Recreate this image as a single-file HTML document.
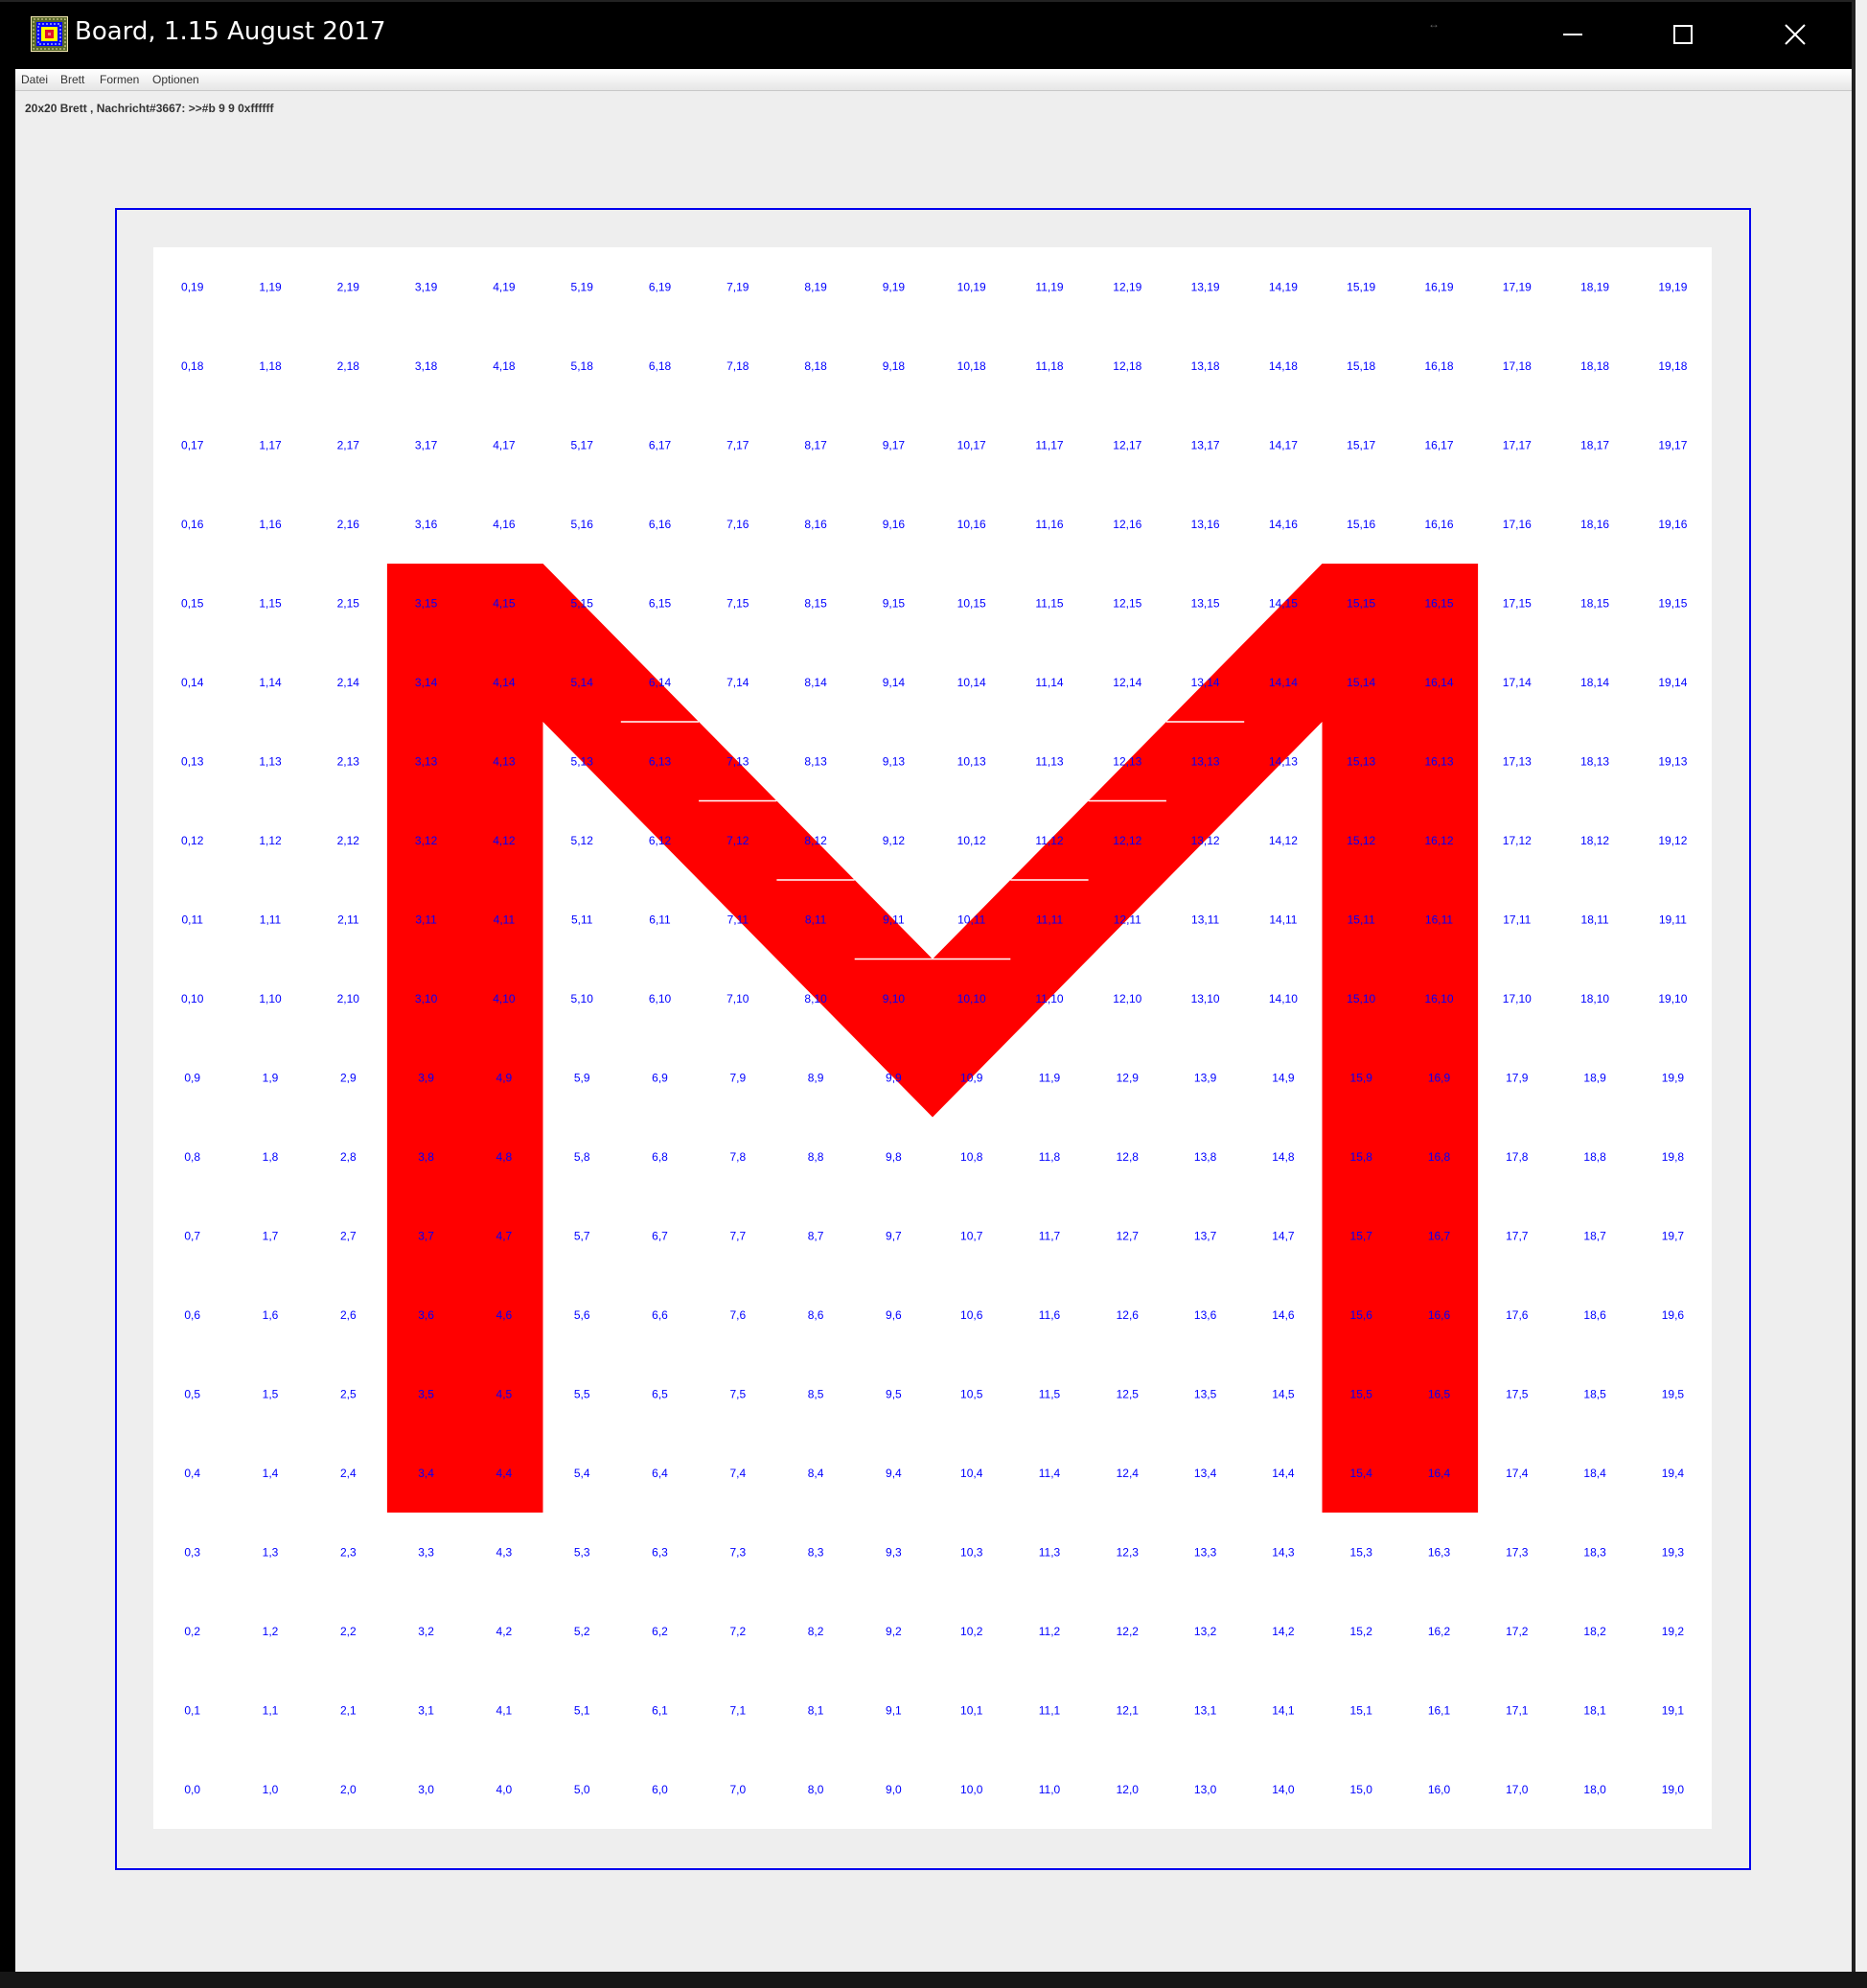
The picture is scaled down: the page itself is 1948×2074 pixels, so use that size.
<!DOCTYPE html>
<html><head><meta charset="utf-8"><style>
html,body{margin:0;padding:0;}
body{width:1948px;height:2074px;position:relative;overflow:hidden;background:#000;font-family:"Liberation Sans",sans-serif;}
.abs{position:absolute;}
#win{left:16px;top:0;width:1916px;height:2057px;background:#eeeeee;}
#title{left:0;top:0;width:1932px;height:72px;background:#000;border-top:2px solid #222;box-sizing:border-box;}
#ttext{left:78px;top:18px;color:#fff;font-size:26px;font-family:"DejaVu Sans","Liberation Sans",sans-serif;letter-spacing:0px;}
#menu{left:16px;top:72px;width:1916px;height:22px;background:linear-gradient(#ffffff,#e6e6e6);border-bottom:1px solid #c8c8c8;}
#menu span{position:absolute;top:4px;font-size:12px;color:#333;}
#status{left:26px;top:106px;font-size:12px;font-weight:bold;color:#333;}
#right{left:1932px;top:0;width:16px;height:2057px;background:#f0f0f0;border-left:4px solid #222;box-sizing:border-box;}
#bottom{left:0;top:2057px;width:1948px;height:17px;background:#161616;}
#blue{left:120px;top:217px;width:1707px;height:1734px;border:2px solid #0000ee;box-sizing:border-box;}
svg text{font-family:"Liberation Sans",sans-serif;font-size:12px;fill:#0000ff;text-anchor:middle;}
</style></head><body>
<div id="win" class="abs"></div>
<div id="title" class="abs"></div>
<svg class="abs" style="left:32px;top:17px" width="40" height="38" viewBox="0 0 40 38">
<rect x="0.5" y="0.5" width="38" height="36" fill="#5a6a2c" stroke="#f2e6b0"/>
<rect x="3" y="3" width="33" height="31" fill="none" stroke="#e8e0a0" stroke-width="1" stroke-dasharray="2 2"/>
<rect x="6" y="6" width="27" height="25" fill="#0000ff"/>
<rect x="8" y="8" width="23" height="21" fill="none" stroke="#ffffff" stroke-width="1" stroke-dasharray="2 2"/>
<rect x="11" y="11" width="17" height="15" fill="#ffff00"/>
<rect x="15" y="14" width="9" height="9" fill="#e0102a"/>
<rect x="18" y="17" width="3" height="3" fill="#f08080"/>
</svg>
<div id="ttext" class="abs">Board, 1.15 August 2017</div>
<div class="abs" style="left:1490px;top:18px;color:#666;font-size:12px">↔</div>
<div class="abs" style="left:1631px;top:35px;width:20px;height:2px;background:#fff"></div>
<div class="abs" style="left:1746px;top:26px;width:20px;height:20px;border:2px solid #fff;box-sizing:border-box"></div>
<svg class="abs" style="left:1862px;top:25px" width="22" height="22"><path d="M1 1L21 21M21 1L1 21" stroke="#fff" stroke-width="2"/></svg>
<div id="menu" class="abs"><span style="left:6px">Datei</span><span style="left:47px">Brett</span><span style="left:88px">Formen</span><span style="left:143px">Optionen</span></div>
<div id="status" class="abs">20x20 Brett , Nachricht#3667: &gt;&gt;#b 9 9 0xffffff</div>
<div id="blue" class="abs"></div>
<div id="right" class="abs"></div>
<div id="bottom" class="abs"></div>
<svg class="abs" style="left:160px;top:258px" width="1626" height="1650">
<rect width="1626" height="1650" fill="#fff"/>
<g fill="#ff0000">
<rect x="243.9" y="330" width="162.6" height="990"/>
<rect x="1219.5" y="330" width="162.6" height="990"/>
<polygon points="406.5,330 813,742.5 813,907.5 406.5,495"/>
<polygon points="1219.5,330 813,742.5 813,907.5 1219.5,495"/>
</g>
<g stroke="#fff" stroke-width="1.5">
<line x1="487.8" y1="495" x2="569.1" y2="495"/><line x1="1056.9" y1="495" x2="1138.2" y2="495"/>
<line x1="569.1" y1="577.5" x2="650.4" y2="577.5"/><line x1="975.6" y1="577.5" x2="1056.9" y2="577.5"/>
<line x1="650.4" y1="660" x2="731.7" y2="660"/><line x1="894.3" y1="660" x2="975.6" y2="660"/>
<line x1="731.7" y1="742.5" x2="894.3" y2="742.5"/>
</g>
<g transform="translate(0,45.3)"><text x="40.7">0,19</text><text x="122">1,19</text><text x="203.3">2,19</text><text x="284.6">3,19</text><text x="365.9">4,19</text><text x="447.2">5,19</text><text x="528.5">6,19</text><text x="609.8">7,19</text><text x="691.1">8,19</text><text x="772.4">9,19</text><text x="853.7">10,19</text><text x="935">11,19</text><text x="1016.3">12,19</text><text x="1097.6">13,19</text><text x="1178.9">14,19</text><text x="1260.2">15,19</text><text x="1341.5">16,19</text><text x="1422.8">17,19</text><text x="1504.1">18,19</text><text x="1585.4">19,19</text></g>
<g transform="translate(0,127.8)"><text x="40.7">0,18</text><text x="122">1,18</text><text x="203.3">2,18</text><text x="284.6">3,18</text><text x="365.9">4,18</text><text x="447.2">5,18</text><text x="528.5">6,18</text><text x="609.8">7,18</text><text x="691.1">8,18</text><text x="772.4">9,18</text><text x="853.7">10,18</text><text x="935">11,18</text><text x="1016.3">12,18</text><text x="1097.6">13,18</text><text x="1178.9">14,18</text><text x="1260.2">15,18</text><text x="1341.5">16,18</text><text x="1422.8">17,18</text><text x="1504.1">18,18</text><text x="1585.4">19,18</text></g>
<g transform="translate(0,210.3)"><text x="40.7">0,17</text><text x="122">1,17</text><text x="203.3">2,17</text><text x="284.6">3,17</text><text x="365.9">4,17</text><text x="447.2">5,17</text><text x="528.5">6,17</text><text x="609.8">7,17</text><text x="691.1">8,17</text><text x="772.4">9,17</text><text x="853.7">10,17</text><text x="935">11,17</text><text x="1016.3">12,17</text><text x="1097.6">13,17</text><text x="1178.9">14,17</text><text x="1260.2">15,17</text><text x="1341.5">16,17</text><text x="1422.8">17,17</text><text x="1504.1">18,17</text><text x="1585.4">19,17</text></g>
<g transform="translate(0,292.8)"><text x="40.7">0,16</text><text x="122">1,16</text><text x="203.3">2,16</text><text x="284.6">3,16</text><text x="365.9">4,16</text><text x="447.2">5,16</text><text x="528.5">6,16</text><text x="609.8">7,16</text><text x="691.1">8,16</text><text x="772.4">9,16</text><text x="853.7">10,16</text><text x="935">11,16</text><text x="1016.3">12,16</text><text x="1097.6">13,16</text><text x="1178.9">14,16</text><text x="1260.2">15,16</text><text x="1341.5">16,16</text><text x="1422.8">17,16</text><text x="1504.1">18,16</text><text x="1585.4">19,16</text></g>
<g transform="translate(0,375.3)"><text x="40.7">0,15</text><text x="122">1,15</text><text x="203.3">2,15</text><text x="284.6">3,15</text><text x="365.9">4,15</text><text x="447.2">5,15</text><text x="528.5">6,15</text><text x="609.8">7,15</text><text x="691.1">8,15</text><text x="772.4">9,15</text><text x="853.7">10,15</text><text x="935">11,15</text><text x="1016.3">12,15</text><text x="1097.6">13,15</text><text x="1178.9">14,15</text><text x="1260.2">15,15</text><text x="1341.5">16,15</text><text x="1422.8">17,15</text><text x="1504.1">18,15</text><text x="1585.4">19,15</text></g>
<g transform="translate(0,457.8)"><text x="40.7">0,14</text><text x="122">1,14</text><text x="203.3">2,14</text><text x="284.6">3,14</text><text x="365.9">4,14</text><text x="447.2">5,14</text><text x="528.5">6,14</text><text x="609.8">7,14</text><text x="691.1">8,14</text><text x="772.4">9,14</text><text x="853.7">10,14</text><text x="935">11,14</text><text x="1016.3">12,14</text><text x="1097.6">13,14</text><text x="1178.9">14,14</text><text x="1260.2">15,14</text><text x="1341.5">16,14</text><text x="1422.8">17,14</text><text x="1504.1">18,14</text><text x="1585.4">19,14</text></g>
<g transform="translate(0,540.3)"><text x="40.7">0,13</text><text x="122">1,13</text><text x="203.3">2,13</text><text x="284.6">3,13</text><text x="365.9">4,13</text><text x="447.2">5,13</text><text x="528.5">6,13</text><text x="609.8">7,13</text><text x="691.1">8,13</text><text x="772.4">9,13</text><text x="853.7">10,13</text><text x="935">11,13</text><text x="1016.3">12,13</text><text x="1097.6">13,13</text><text x="1178.9">14,13</text><text x="1260.2">15,13</text><text x="1341.5">16,13</text><text x="1422.8">17,13</text><text x="1504.1">18,13</text><text x="1585.4">19,13</text></g>
<g transform="translate(0,622.8)"><text x="40.7">0,12</text><text x="122">1,12</text><text x="203.3">2,12</text><text x="284.6">3,12</text><text x="365.9">4,12</text><text x="447.2">5,12</text><text x="528.5">6,12</text><text x="609.8">7,12</text><text x="691.1">8,12</text><text x="772.4">9,12</text><text x="853.7">10,12</text><text x="935">11,12</text><text x="1016.3">12,12</text><text x="1097.6">13,12</text><text x="1178.9">14,12</text><text x="1260.2">15,12</text><text x="1341.5">16,12</text><text x="1422.8">17,12</text><text x="1504.1">18,12</text><text x="1585.4">19,12</text></g>
<g transform="translate(0,705.3)"><text x="40.7">0,11</text><text x="122">1,11</text><text x="203.3">2,11</text><text x="284.6">3,11</text><text x="365.9">4,11</text><text x="447.2">5,11</text><text x="528.5">6,11</text><text x="609.8">7,11</text><text x="691.1">8,11</text><text x="772.4">9,11</text><text x="853.7">10,11</text><text x="935">11,11</text><text x="1016.3">12,11</text><text x="1097.6">13,11</text><text x="1178.9">14,11</text><text x="1260.2">15,11</text><text x="1341.5">16,11</text><text x="1422.8">17,11</text><text x="1504.1">18,11</text><text x="1585.4">19,11</text></g>
<g transform="translate(0,787.8)"><text x="40.7">0,10</text><text x="122">1,10</text><text x="203.3">2,10</text><text x="284.6">3,10</text><text x="365.9">4,10</text><text x="447.2">5,10</text><text x="528.5">6,10</text><text x="609.8">7,10</text><text x="691.1">8,10</text><text x="772.4">9,10</text><text x="853.7">10,10</text><text x="935">11,10</text><text x="1016.3">12,10</text><text x="1097.6">13,10</text><text x="1178.9">14,10</text><text x="1260.2">15,10</text><text x="1341.5">16,10</text><text x="1422.8">17,10</text><text x="1504.1">18,10</text><text x="1585.4">19,10</text></g>
<g transform="translate(0,870.3)"><text x="40.7">0,9</text><text x="122">1,9</text><text x="203.3">2,9</text><text x="284.6">3,9</text><text x="365.9">4,9</text><text x="447.2">5,9</text><text x="528.5">6,9</text><text x="609.8">7,9</text><text x="691.1">8,9</text><text x="772.4">9,9</text><text x="853.7">10,9</text><text x="935">11,9</text><text x="1016.3">12,9</text><text x="1097.6">13,9</text><text x="1178.9">14,9</text><text x="1260.2">15,9</text><text x="1341.5">16,9</text><text x="1422.8">17,9</text><text x="1504.1">18,9</text><text x="1585.4">19,9</text></g>
<g transform="translate(0,952.8)"><text x="40.7">0,8</text><text x="122">1,8</text><text x="203.3">2,8</text><text x="284.6">3,8</text><text x="365.9">4,8</text><text x="447.2">5,8</text><text x="528.5">6,8</text><text x="609.8">7,8</text><text x="691.1">8,8</text><text x="772.4">9,8</text><text x="853.7">10,8</text><text x="935">11,8</text><text x="1016.3">12,8</text><text x="1097.6">13,8</text><text x="1178.9">14,8</text><text x="1260.2">15,8</text><text x="1341.5">16,8</text><text x="1422.8">17,8</text><text x="1504.1">18,8</text><text x="1585.4">19,8</text></g>
<g transform="translate(0,1035.3)"><text x="40.7">0,7</text><text x="122">1,7</text><text x="203.3">2,7</text><text x="284.6">3,7</text><text x="365.9">4,7</text><text x="447.2">5,7</text><text x="528.5">6,7</text><text x="609.8">7,7</text><text x="691.1">8,7</text><text x="772.4">9,7</text><text x="853.7">10,7</text><text x="935">11,7</text><text x="1016.3">12,7</text><text x="1097.6">13,7</text><text x="1178.9">14,7</text><text x="1260.2">15,7</text><text x="1341.5">16,7</text><text x="1422.8">17,7</text><text x="1504.1">18,7</text><text x="1585.4">19,7</text></g>
<g transform="translate(0,1117.8)"><text x="40.7">0,6</text><text x="122">1,6</text><text x="203.3">2,6</text><text x="284.6">3,6</text><text x="365.9">4,6</text><text x="447.2">5,6</text><text x="528.5">6,6</text><text x="609.8">7,6</text><text x="691.1">8,6</text><text x="772.4">9,6</text><text x="853.7">10,6</text><text x="935">11,6</text><text x="1016.3">12,6</text><text x="1097.6">13,6</text><text x="1178.9">14,6</text><text x="1260.2">15,6</text><text x="1341.5">16,6</text><text x="1422.8">17,6</text><text x="1504.1">18,6</text><text x="1585.4">19,6</text></g>
<g transform="translate(0,1200.3)"><text x="40.7">0,5</text><text x="122">1,5</text><text x="203.3">2,5</text><text x="284.6">3,5</text><text x="365.9">4,5</text><text x="447.2">5,5</text><text x="528.5">6,5</text><text x="609.8">7,5</text><text x="691.1">8,5</text><text x="772.4">9,5</text><text x="853.7">10,5</text><text x="935">11,5</text><text x="1016.3">12,5</text><text x="1097.6">13,5</text><text x="1178.9">14,5</text><text x="1260.2">15,5</text><text x="1341.5">16,5</text><text x="1422.8">17,5</text><text x="1504.1">18,5</text><text x="1585.4">19,5</text></g>
<g transform="translate(0,1282.8)"><text x="40.7">0,4</text><text x="122">1,4</text><text x="203.3">2,4</text><text x="284.6">3,4</text><text x="365.9">4,4</text><text x="447.2">5,4</text><text x="528.5">6,4</text><text x="609.8">7,4</text><text x="691.1">8,4</text><text x="772.4">9,4</text><text x="853.7">10,4</text><text x="935">11,4</text><text x="1016.3">12,4</text><text x="1097.6">13,4</text><text x="1178.9">14,4</text><text x="1260.2">15,4</text><text x="1341.5">16,4</text><text x="1422.8">17,4</text><text x="1504.1">18,4</text><text x="1585.4">19,4</text></g>
<g transform="translate(0,1365.3)"><text x="40.7">0,3</text><text x="122">1,3</text><text x="203.3">2,3</text><text x="284.6">3,3</text><text x="365.9">4,3</text><text x="447.2">5,3</text><text x="528.5">6,3</text><text x="609.8">7,3</text><text x="691.1">8,3</text><text x="772.4">9,3</text><text x="853.7">10,3</text><text x="935">11,3</text><text x="1016.3">12,3</text><text x="1097.6">13,3</text><text x="1178.9">14,3</text><text x="1260.2">15,3</text><text x="1341.5">16,3</text><text x="1422.8">17,3</text><text x="1504.1">18,3</text><text x="1585.4">19,3</text></g>
<g transform="translate(0,1447.8)"><text x="40.7">0,2</text><text x="122">1,2</text><text x="203.3">2,2</text><text x="284.6">3,2</text><text x="365.9">4,2</text><text x="447.2">5,2</text><text x="528.5">6,2</text><text x="609.8">7,2</text><text x="691.1">8,2</text><text x="772.4">9,2</text><text x="853.7">10,2</text><text x="935">11,2</text><text x="1016.3">12,2</text><text x="1097.6">13,2</text><text x="1178.9">14,2</text><text x="1260.2">15,2</text><text x="1341.5">16,2</text><text x="1422.8">17,2</text><text x="1504.1">18,2</text><text x="1585.4">19,2</text></g>
<g transform="translate(0,1530.3)"><text x="40.7">0,1</text><text x="122">1,1</text><text x="203.3">2,1</text><text x="284.6">3,1</text><text x="365.9">4,1</text><text x="447.2">5,1</text><text x="528.5">6,1</text><text x="609.8">7,1</text><text x="691.1">8,1</text><text x="772.4">9,1</text><text x="853.7">10,1</text><text x="935">11,1</text><text x="1016.3">12,1</text><text x="1097.6">13,1</text><text x="1178.9">14,1</text><text x="1260.2">15,1</text><text x="1341.5">16,1</text><text x="1422.8">17,1</text><text x="1504.1">18,1</text><text x="1585.4">19,1</text></g>
<g transform="translate(0,1612.8)"><text x="40.7">0,0</text><text x="122">1,0</text><text x="203.3">2,0</text><text x="284.6">3,0</text><text x="365.9">4,0</text><text x="447.2">5,0</text><text x="528.5">6,0</text><text x="609.8">7,0</text><text x="691.1">8,0</text><text x="772.4">9,0</text><text x="853.7">10,0</text><text x="935">11,0</text><text x="1016.3">12,0</text><text x="1097.6">13,0</text><text x="1178.9">14,0</text><text x="1260.2">15,0</text><text x="1341.5">16,0</text><text x="1422.8">17,0</text><text x="1504.1">18,0</text><text x="1585.4">19,0</text></g>
</svg>
</body></html>
